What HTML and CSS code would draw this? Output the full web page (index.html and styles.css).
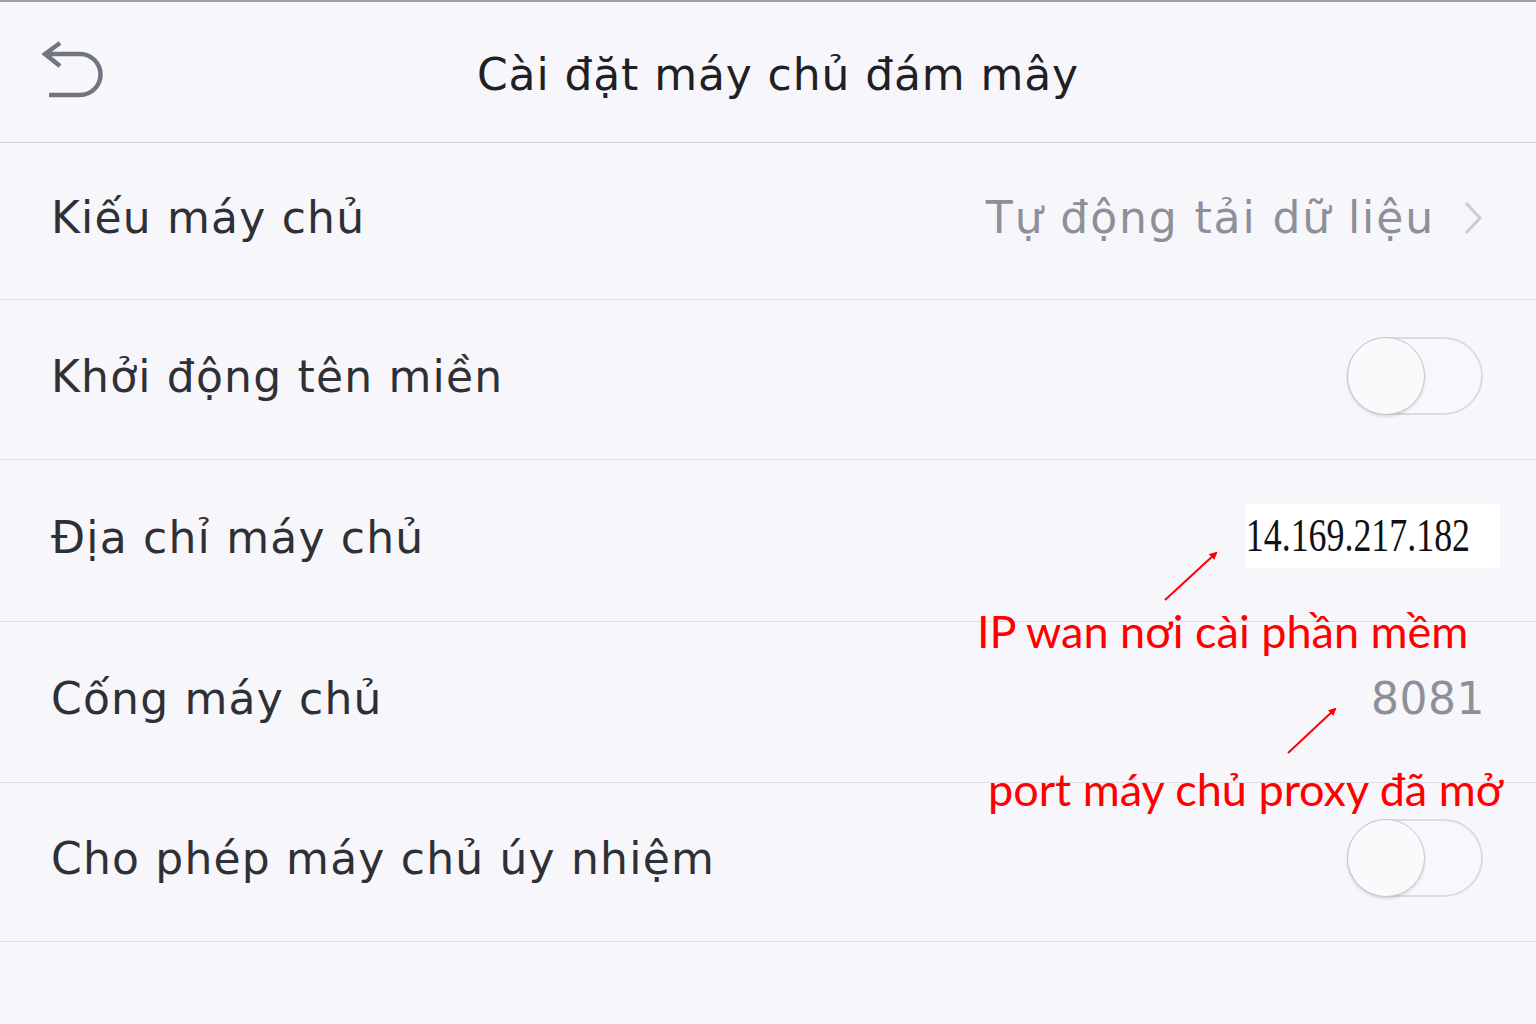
FILE: index.html
```html
<!DOCTYPE html>
<html lang="vi">
<head>
  <meta charset="UTF-8">
  <title>Cài đặt máy chủ đám mây</title>
  <link rel="stylesheet" href="styles.css">
</head>
<body>
  <div class="screen">
    <header class="nav">
      <svg class="back" width="70" height="70" viewBox="0 0 70 70">
        <path d="M19 2 L4 13 L19 25 M5 13 H39 A20.5 20.5 0 0 1 39 54 H8" fill="none" stroke="#6f7581" stroke-width="4.5" stroke-linecap="butt" stroke-linejoin="miter"/>
      </svg>
      <h1>Cài đặt máy chủ đám mây</h1>
    </header>

    <ul class="list">
      <li class="row row-type">
        <span class="label">Kiếu máy chủ</span>
        <span class="value">Tự động tải dữ liệu
          <svg class="chev" width="20" height="34" viewBox="0 0 20 34"><path d="M3 2 L17 17 L3 32" fill="none" stroke="#cbcbd1" stroke-width="3"/></svg>
        </span>
      </li>
      <li class="row row-domain">
        <span class="label">Khởi động tên miền</span>
        <span class="switch"><span class="knob"></span></span>
      </li>
      <li class="row row-addr">
        <span class="label">Địa chỉ máy chủ</span>
        <span class="ipbox"><span class="ip">14.169.217.182</span></span>
      </li>
      <li class="row row-port">
        <span class="label">Cống máy chủ</span>
        <span class="value port">8081</span>
      </li>
      <li class="row row-proxy">
        <span class="label">Cho phép máy chủ úy nhiệm</span>
        <span class="switch"><span class="knob"></span></span>
      </li>
    </ul>

    <!-- annotations drawn over the screenshot -->
    <svg class="arrows" width="1536" height="1024" viewBox="0 0 1536 1024">
      <defs>
        <marker id="head" markerWidth="8" markerHeight="8" refX="6" refY="4" orient="auto" markerUnits="userSpaceOnUse">
          <path d="M0 0 L8 4 L0 8 Z" fill="#ff0000"/>
        </marker>
      </defs>
      <line x1="1165" y1="598" x2="1216" y2="551" stroke="#ff0000" stroke-width="2" marker-end="url(#head)"/>
      <line x1="1288" y1="751" x2="1335" y2="707" stroke="#ff0000" stroke-width="2" marker-end="url(#head)"/>
    </svg>
    <div class="note note-ip">IP wan nơi cài phần mềm</div>
    <div class="note note-port">port máy chủ proxy đã mở</div>
  </div>
</body>
</html>
```

FILE: styles.css
```css
body { margin: 0; background: #f7f6fa; font-family: "DejaVu Sans", Verdana, sans-serif; color: #333438; }
.screen { position: relative; width: 1536px; height: 1024px; overflow: hidden; border-top: 2px solid #9c9ca4; box-sizing: border-box; }

.nav { height: 140px; display: flex; align-items: center; justify-content: center; position: relative; border-bottom: 1px solid #d6d6da; }
.nav h1 { margin: 4px 0 0 20px; font-size: 44px; font-weight: normal; color: #1f2024; letter-spacing: 0.9px; }
.back { position: absolute; left: 41px; top: 39px; }

.list { list-style: none; margin: 0; padding: 0; }
.row { height: 160px; display: flex; align-items: center; justify-content: space-between; padding: 0 53px 0 51px; border-bottom: 1px solid #dedee2; box-sizing: border-box; }
.row-type { height: 157px; }
.row-addr { height: 162px; }
.row-port { height: 161px; }
.row-proxy { height: 159px; }
.label { font-size: 44px; color: #2f3035; letter-spacing: 1.2px; margin-top: -7px; }
.value { font-size: 44px; color: #8e9099; display: flex; align-items: center; gap: 28px; letter-spacing: 1.9px; margin-top: -7px; }
.port { margin-right: -2px; letter-spacing: 0.5px; }

.switch { width: 136px; height: 78px; border: 2px solid #dcdce0; border-radius: 40px; box-sizing: border-box; position: relative; background: #f8f7fb; margin-top: -8px; }
.knob { position: absolute; left: -2px; top: -2px; width: 78px; height: 78px; border-radius: 50%; background: #fafafc; border: 1.5px solid #c8c8cc; box-sizing: border-box; box-shadow: 0 2px 3px rgba(0,0,0,0.12); }

.ipbox { background: #ffffff; width: 255px; height: 64px; margin-right: -17px; margin-top: -10px; display: flex; align-items: center; overflow: hidden; }
.ip { font-family: "Liberation Serif", serif; font-size: 46px; color: #111; display: inline-block; transform: scaleX(0.78); transform-origin: left center; padding-left: 1px; }

.arrows { position: absolute; left: 0; top: 0; pointer-events: none; }
.note { position: absolute; font-family: Lato, "Noto Sans", sans-serif; font-size: 45px; color: #ff0000; white-space: nowrap; }
.note-ip { left: 977px; top: 602px; }
.note-port { left: 988px; top: 760px; }
```
